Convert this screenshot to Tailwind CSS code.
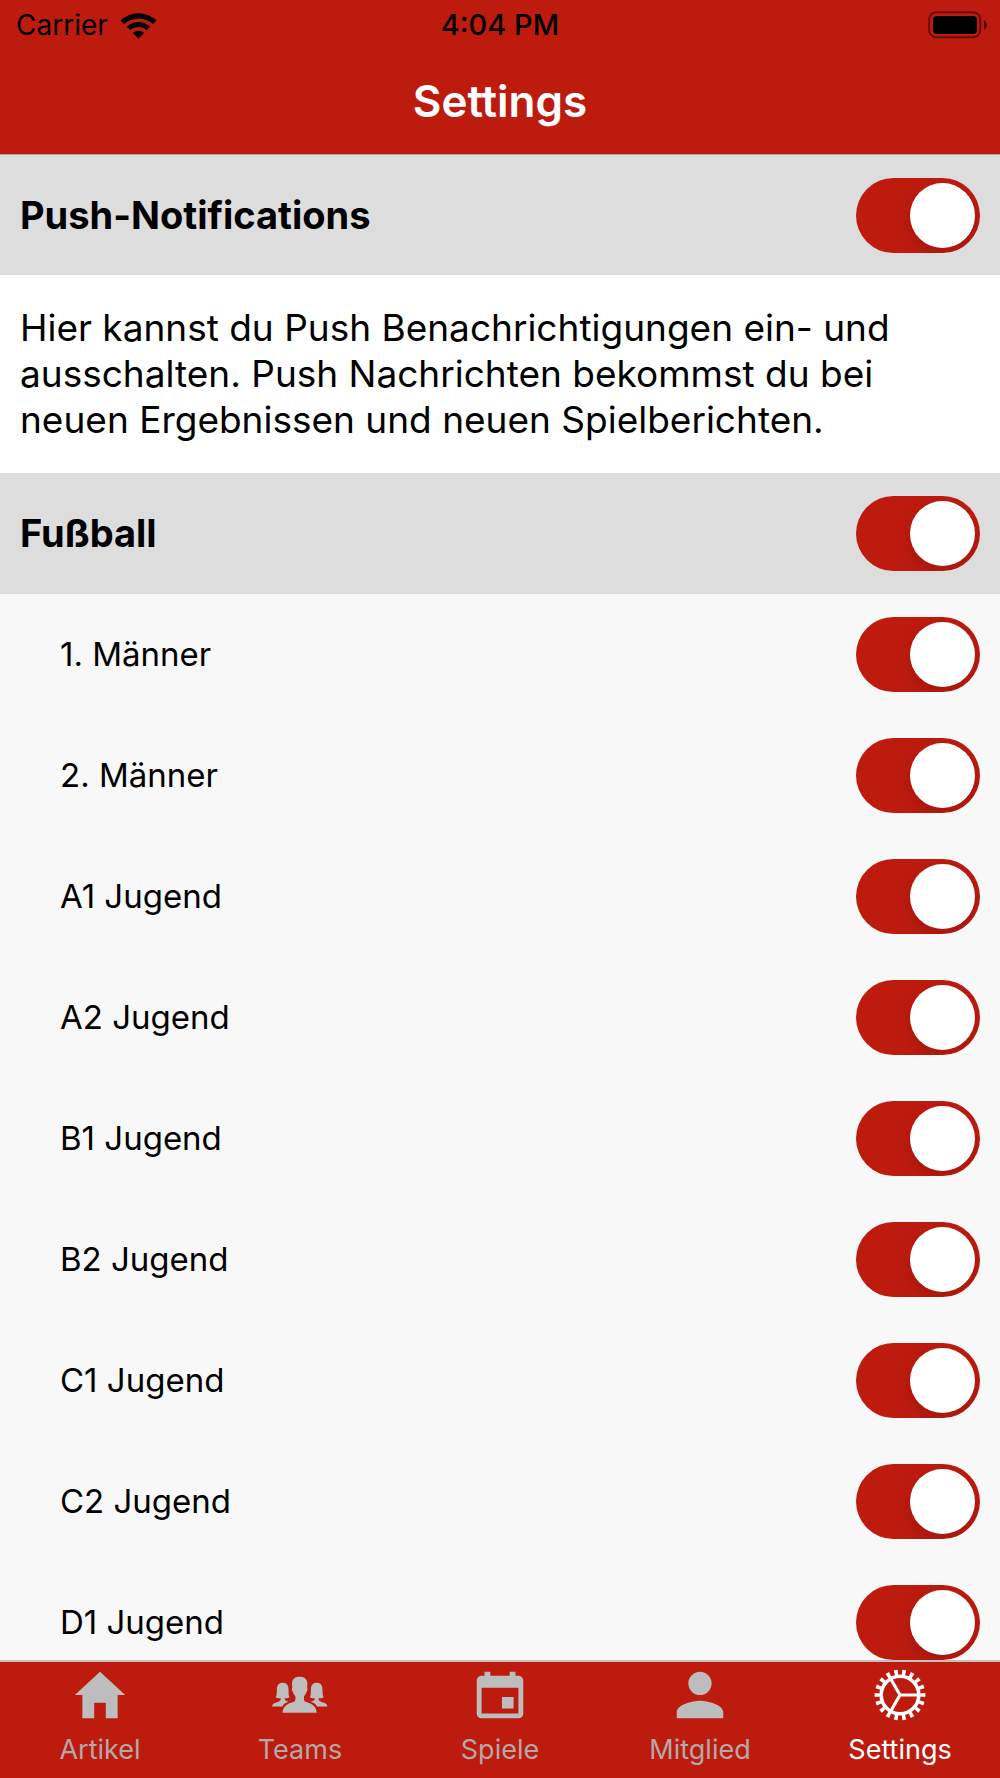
<!DOCTYPE html>
<html lang="de">
<head>
  <meta charset="UTF-8">
  <meta name="viewport" content="width=device-width, initial-scale=1.0">
  <title>Settings</title>
  <script src="https://cdn.jsdelivr.net/npm/@tailwindcss/browser@4"></script>
</head>
<body class="flex h-screen flex-col bg-[#f8f8f8] font-['Inter','Liberation_Sans',sans-serif] text-black">
  <header class="border-b border-[#b2a8a7] bg-[#be1b0f]">
    <div class="grid h-[50px] grid-cols-3 items-center px-4">
      <div class="flex items-center gap-3">
        <span class="text-[28px]">Carrier</span>
        <svg class="h-[27px] w-[37px]" viewBox="0 0 37 27" aria-label="WLAN">
          <path d="M0.5 8.500A26 26 0 0 1 36.500 8.500L32.800 12.200A20.500 20.500 0 0 0 4.200 12.200Z"/>
          <path d="M6.700 14.700A17 17 0 0 1 30.300 14.700L26.600 18.200A12 12 0 0 0 10.400 18.200Z"/>
          <path d="M12.900 21A8 8 0 0 1 24.100 21L18.500 26.800Z"/>
        </svg>
      </div>
      <span class="text-center text-[29px] font-medium">4:04 PM</span>
      <svg class="mr-[-4px] h-[28px] w-[60px] justify-self-end" viewBox="0 0 60 28" aria-label="Batterie">
        <rect x="1.2" y="1.2" width="51" height="25" rx="7" fill="none" stroke="#000" stroke-opacity=".45" stroke-width="2"/>
        <rect x="5" y="5" width="44" height="18" rx="4"/>
        <path d="M56 9Q59 11 59 14Q59 17 56 19Z" fill-opacity=".6"/>
      </svg>
    </div>
    <h1 class="h-[104px] pt-6 text-center text-[44px] leading-[54px] font-semibold text-white">Settings</h1>
  </header>

  <main class="min-h-0 flex-1 overflow-y-auto [scrollbar-width:none]">
    <label class="flex h-[120px] items-center justify-between bg-[#dddddd] px-5">
      <span class="text-[38px] font-bold">Push-Notifications</span>
      <input type="checkbox" checked class="flex h-[75px] w-[124px] appearance-none items-center overflow-hidden rounded-full bg-gray-300 px-[5px] before:size-[65px] before:rounded-full before:bg-white before:shadow-[0_6px_16px_rgba(0,0,0,0.15)] checked:justify-end checked:bg-[#be1b0f]">
    </label>
    <p class="bg-white px-5 py-[30px] text-[37px] leading-[46px]">Hier kannst du Push Benachrichtigungen ein- und ausschalten. Push Nachrichten bekommst du bei neuen Ergebnissen und neuen Spielberichten.</p>
    <label class="flex h-[121px] items-center justify-between bg-[#dddddd] px-5">
      <span class="text-[38px] font-bold">Fußball</span>
      <input type="checkbox" checked class="flex h-[75px] w-[124px] appearance-none items-center overflow-hidden rounded-full bg-gray-300 px-[5px] before:size-[65px] before:rounded-full before:bg-white before:shadow-[0_6px_16px_rgba(0,0,0,0.15)] checked:justify-end checked:bg-[#be1b0f]">
    </label>
    <div id="teamList"></div>
  </main>

  <nav class="grid h-[118px] grid-cols-5 border-t-2 border-[#c4c0c0] bg-[#be1b0f] text-[27px] leading-8 text-[#b3a9a8]">
    <a href="#artikel" class="flex flex-col items-center gap-2 pt-[2px]">
      <svg class="size-[62px]" viewBox="0 0 512 512" fill="#bdbdbd"><path d="M208 448V320h96v128h97.600V256H464L256 64 48 256h62.400v192z"/></svg>
      Artikel
    </a>
    <a href="#teams" class="flex flex-col items-center gap-2 pt-[2px]">
      <svg class="size-[62px]" viewBox="0 0 62 62" fill="#bdbdbd">
        <path id="sidePerson" d="M13.700 18.700C9.800 18.700 8 21.300 7.900 25C7.800 29 7.900 31.500 6.700 33.200C8.200 34.200 10 34.300 11.700 34.300C12 36.500 11 37.200 8.800 37.900C5.500 38.800 3.200 39.800 3 42.400H13.400C14.500 40.200 16.500 38.800 19.800 37.800C17 37 15.500 36.500 15.700 34.300C17.500 34.300 19 34.200 20.500 33.200C19.500 31.500 19.600 29 19.500 25C19.400 21.300 17.600 18.700 13.700 18.700Z"/>
        <use href="#sidePerson" transform="matrix(-1 0 0 1 61.400 0)"/>
        <path d="M30.700 12.800C25.500 12.800 22.900 15.500 23 20C23.100 22 23.300 23.300 23.200 24.300C22.400 24.800 22.900 27.300 24 27.900C24.500 30 25.400 31.300 26.400 32.300C26.600 34.500 26.500 36 25.800 37.200C24.500 38.900 14.200 38.500 13.700 48.700H47.700C47.200 38.500 36.900 38.900 35.600 37.200C34.900 36 34.800 34.500 35 32.300C36 31.300 36.900 30 37.400 27.900C38.500 27.300 39 24.800 38.200 24.300C38.100 23.300 38.300 22 38.400 20C38.500 15.500 35.900 12.800 30.700 12.800Z"/>
      </svg>
      Teams
    </a>
    <a href="#spiele" class="flex flex-col items-center gap-2 pt-[2px]">
      <svg class="size-[62px]" viewBox="0 0 512 512" fill="#bdbdbd"><path d="M368 272h-96v96h96v-96zM336 64v32H176V64h-48v32h-24c-22 0-40 18-40 40v272c0 22 18 40 40 40h304c22 0 40-18 40-40V136c0-22-18-40-40-40h-24V64h-48zm72 344H104V196h304v212z"/></svg>
      Spiele
    </a>
    <a href="#mitglied" class="flex flex-col items-center gap-2 pt-[2px]">
      <svg class="size-[62px]" viewBox="0 0 512 512" fill="#bdbdbd"><path d="M256 256c52.800 0 96-43.200 96-96s-43.200-96-96-96-96 43.200-96 96 43.200 96 96 96zm0 48c-63.600 0-192 32.400-192 96v48h384v-48c0-63.600-128.400-96-192-96z"/></svg>
      Mitglied
    </a>
    <a href="#settings" class="flex flex-col items-center gap-2 pt-[2px] text-white">
      <svg class="size-[62px]" viewBox="0 0 62 62" fill="none" stroke="#fff">
        <!-- teeth, rim, spokes -->
        <circle cx="31" cy="31" r="22.700" stroke-width="5.400" pathLength="360" stroke-dasharray="9 11" stroke-dashoffset="4.500"/>
        <circle cx="31" cy="31" r="18.800" stroke-width="3.600"/>
        <path d="M31 31H50M31 31L21.500 14.500M31 31L21.500 47.500" stroke-width="3.200"/>
      </svg>
      Settings
    </a>
  </nav>

  <script>
    const teams = ['1. Männer', '2. Männer', 'A1 Jugend', 'A2 Jugend', 'B1 Jugend', 'B2 Jugend', 'C1 Jugend', 'C2 Jugend', 'D1 Jugend'];
    document.getElementById('teamList').innerHTML = teams.map(team => `
      <label class="flex h-[121px] items-center justify-between pr-5 pl-[60px]">
        <span class="text-[33px]">${team}</span>
        <input type="checkbox" checked class="flex h-[75px] w-[124px] appearance-none items-center overflow-hidden rounded-full bg-gray-300 px-[5px] before:size-[65px] before:rounded-full before:bg-white before:shadow-[0_6px_16px_rgba(0,0,0,0.15)] checked:justify-end checked:bg-[#be1b0f]">
      </label>`).join('');
  </script>
</body>
</html>
